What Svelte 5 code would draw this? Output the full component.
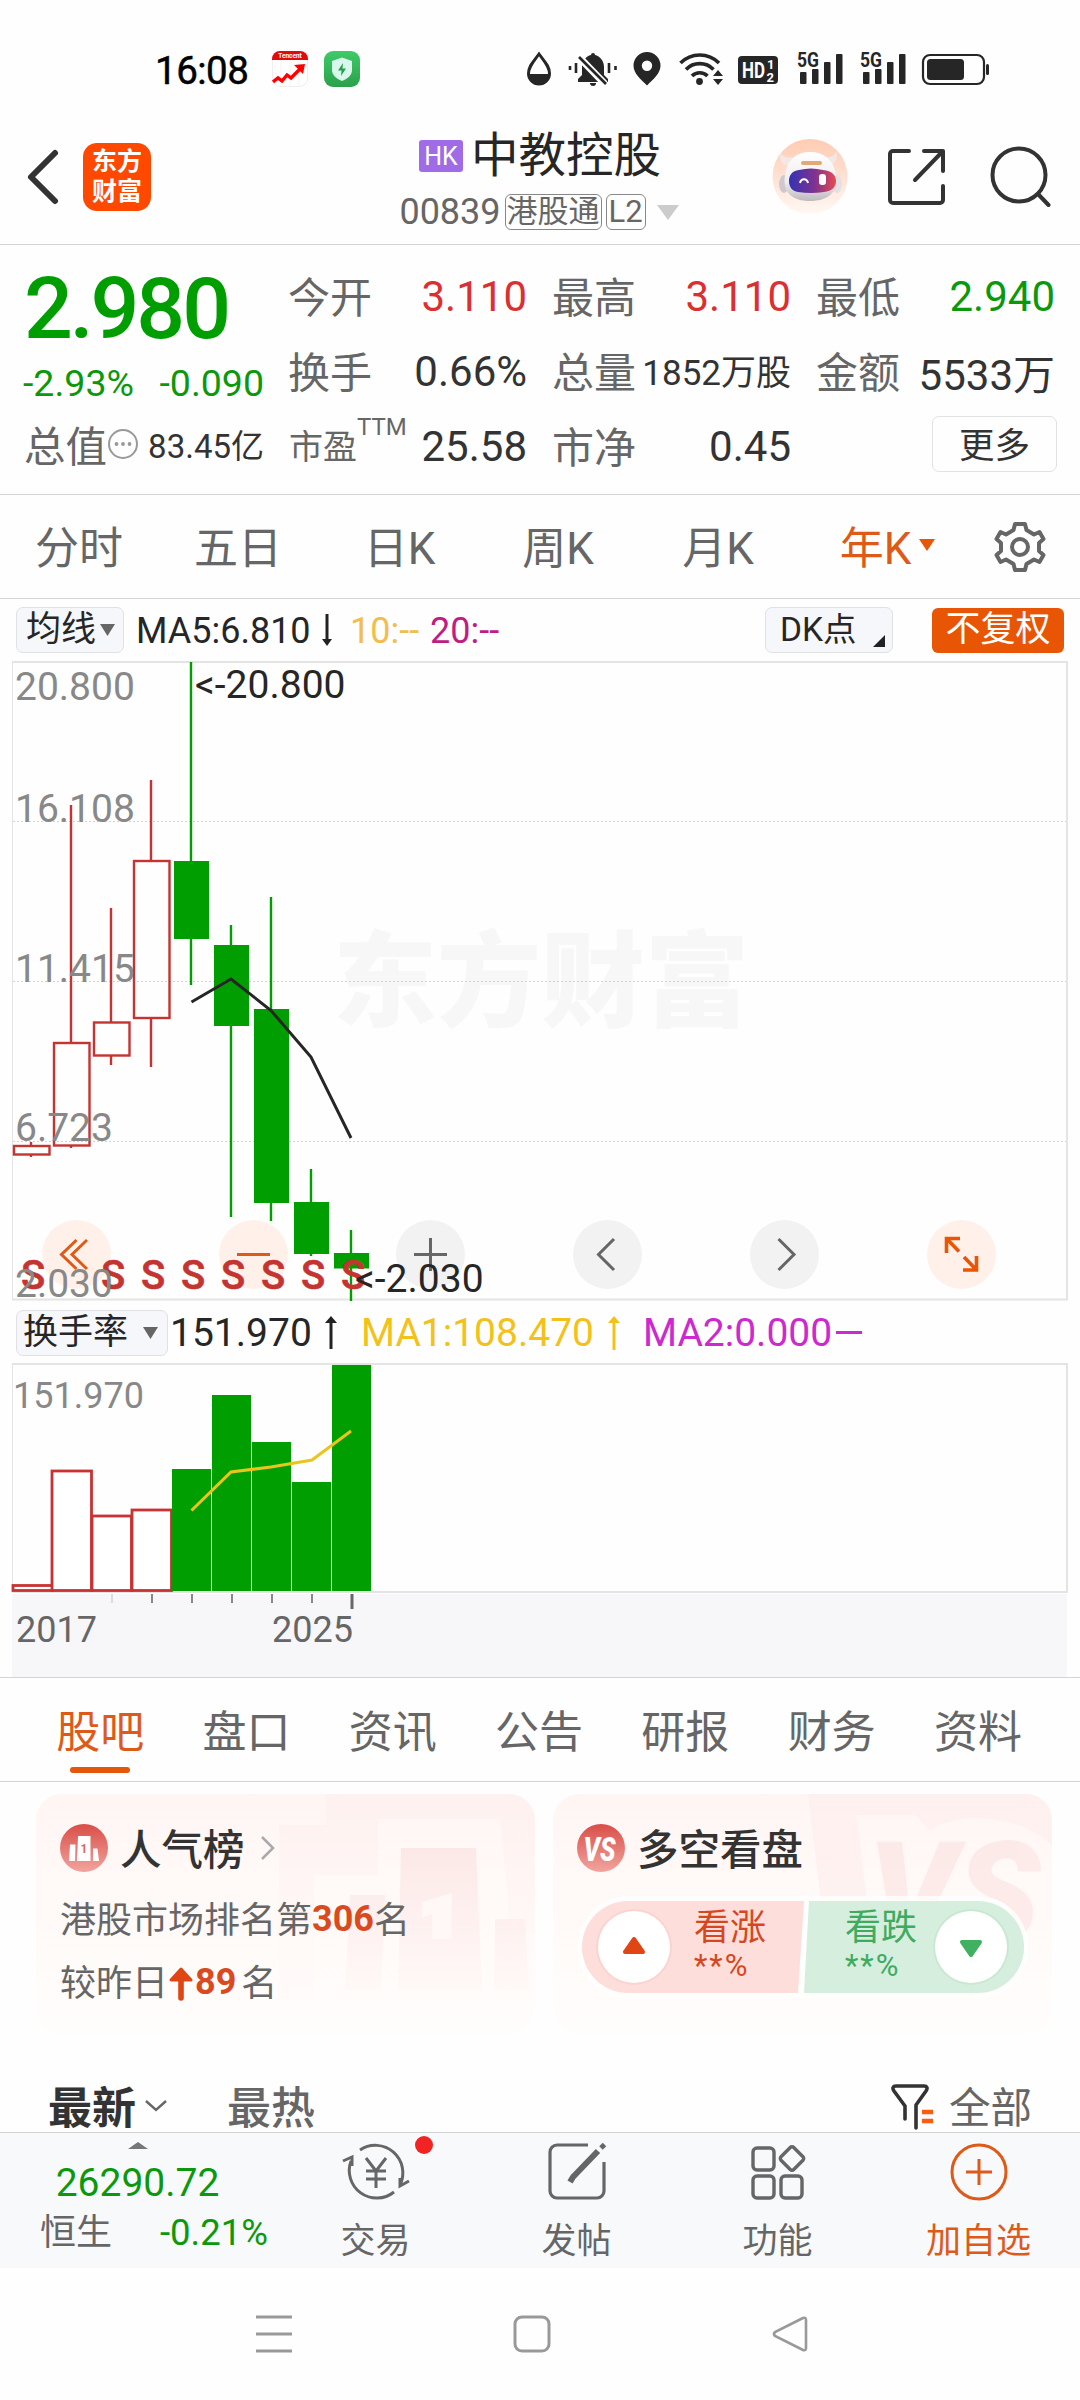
<script lang="ts">
    const quotes = [
        { label: "今开", value: "3.110", tone: "up" },
        { label: "最高", value: "3.110", tone: "up" },
        { label: "最低", value: "2.940", tone: "down" },
        { label: "换手", value: "0.66%", tone: "" },
        { label: "总量", value: "1852万股", tone: "small" },
        { label: "金额", value: "5533万", tone: "" },
    ];

    const periods = ["分时", "五日", "日K", "周K", "月K"];
    const sections = ["股吧", "盘口", "资讯", "公告", "研报", "财务", "资料"];

    // x, high, top of body, bottom of body, low
    const candles = [
        { x: 31, high: 1142, top: 1146, bottom: 1154.5, low: 1157, up: true },
        { x: 71, high: 805, top: 1043, bottom: 1145.5, low: 1148, up: true },
        { x: 111, high: 908, top: 1022.5, bottom: 1055.5, low: 1065, up: true },
        { x: 151, high: 780, top: 861, bottom: 1018, low: 1067, up: true },
        { x: 191, high: 662, top: 861, bottom: 939, low: 985, up: false },
        { x: 231, high: 925, top: 945, bottom: 1026, low: 1217, up: false },
        { x: 271, high: 897, top: 1009, bottom: 1203, low: 1221, up: false },
        { x: 311, high: 1169, top: 1202, bottom: 1254, low: 1256, up: false },
        { x: 351, high: 1230, top: 1253, bottom: 1268.5, low: 1301, up: false },
    ];

    const grid = [821.5, 981.5, 1141.5];
    const prices = [
        { y: 700, text: "20.800" },
        { y: 822, text: "16.108" },
        { y: 982, text: "11.415" },
        { y: 1141, text: "6.723" },
        { y: 1297, text: "2.030" },
    ];
    const signals = [33, 113, 153, 193, 233, 273, 313, 353];

    const volumes = [
        { x: 13, top: 1585.5, up: true },
        { x: 52, top: 1471, up: true },
        { x: 92, top: 1516, up: true },
        { x: 132, top: 1510, up: true },
        { x: 172, top: 1469, up: false },
        { x: 212, top: 1395, up: false },
        { x: 252, top: 1442, up: false },
        { x: 292, top: 1482, up: false },
        { x: 332, top: 1365, up: false },
    ];
    const ticks = [152, 192, 232, 272, 312];
</script>

<div class="screen">
    <div class="status">
        <span class="time">16:08</span>
        <svg class="app-icon" width="36" height="36" viewBox="0 0 36 36">
            <rect x="0.5" y="0.5" width="35" height="35" rx="8" fill="#fff" stroke="#eee" />
            <path d="M0 9V8a8 8 0 0 1 8-8h20a8 8 0 0 1 8 8v1z" fill="#e00b0b" />
            <path d="M9 9v26M18 9v26M27 9v26" stroke="#f3f3f3" />
            <text x="18" y="7" font-size="6.5" font-weight="700" fill="#fff" text-anchor="middle">Tencent</text>
            <path d="M1 31l5-4 4 3 5-6 4 3 10-10" fill="none" stroke="#f00" stroke-width="3.4" />
            <path d="M22 14l11-1-2 10z" fill="#f00" />
        </svg>
        <svg class="shield" width="36" height="36" viewBox="0 0 36 36">
            <defs>
                <linearGradient id="green" x1="0" y1="0" x2="0" y2="1">
                    <stop offset="0" stop-color="#3ecb68" /><stop offset="1" stop-color="#2ba04b" />
                </linearGradient>
            </defs>
            <rect width="36" height="36" rx="9" fill="url(#green)" />
            <path d="M18 6.500l10 3.500v9c0 5-4 8.500-10 11-6-2.500-10-6-10-11v-9z" fill="#d9f7ec" />
            <path d="M19 12l-5 7.500h3.500L17 25l5-7.500h-3.500z" fill="#25a04a" />
        </svg>
        <svg class="system" width="470" height="40" viewBox="522 48 470 40">
            <path d="M539 54c-5 7-10.500 12-10.500 19.500a10.500 10.500 0 0 0 21 0C549.500 66 544 61 539 54z" fill="none" stroke="#262626" stroke-width="3" />
            <path d="M528.500 74h21c0 7-5 11-10.500 11s-10.500-4-10.500-11z" fill="#262626" />
            <path d="M578 82v-3l4-4v-8c0-6 4-11 9-12a2 2 0 0 1 4 0c5 1 9 6 9 12v8l4 4v3z" fill="#262626" />
            <path d="M590 83h6a3 3 0 0 1-6 0z" fill="#262626" />
            <path d="M577 55l28 29" stroke="#fff" stroke-width="7" />
            <path d="M579 57l27 27" stroke="#262626" stroke-width="2.600" />
            <path d="M570 66v4M576 63v10M609 63v10M615.500 66v4" stroke="#262626" stroke-width="2.600" />
            <path fill-rule="evenodd" d="M647 52a13.500 13.500 0 0 1 13.500 13.500c0 8-7 13.500-13.500 20-6.500-6.500-13.500-12-13.500-20A13.500 13.500 0 0 1 647 52zm0 8.500a5 5 0 1 0 0 10.400 5 5 0 0 0 0-10.400z" fill="#262626" />
            <g fill="none" stroke="#262626" stroke-width="3.600">
                <path d="M680.500 63a27 27 0 0 1 38.500 0M686 69.500a19 19 0 0 1 27.500 0M692 76a11 11 0 0 1 15.500 0" />
            </g>
            <circle cx="699.500" cy="81.500" r="3.400" fill="#262626" />
            <path d="M713 76l5-6 5 6zM713 79l5 6 5-6z" fill="#262626" />
            <rect x="738" y="56" width="40" height="28" rx="4" fill="#262626" />
            <g fill="#fff" font-weight="700">
                <text x="742" y="78" font-size="22" textLength="23" lengthAdjust="spacingAndGlyphs">HD</text>
                <text x="767" y="69" font-size="13">1</text>
                <text x="766.500" y="81.500" font-size="13">2</text>
            </g>
            {#each [797, 860] as x}
                <text {x} y="67" font-size="21" font-weight="700" fill="#262626" textLength="22" lengthAdjust="spacingAndGlyphs">5G</text>
                <rect x={x + 3} y="72" width="6.500" height="12" rx="1" fill="#262626" />
                <rect x={x + 15} y="69" width="6.500" height="15" rx="1" fill="#262626" />
                <rect x={x + 27} y="62" width="6.500" height="22" rx="1" fill="#262626" />
                <rect x={x + 39} y="54" width="6.500" height="30" rx="1" fill="#262626" />
            {/each}
            <rect x="923" y="55" width="61" height="29" rx="7" fill="none" stroke="#262626" stroke-width="2.200" />
            <rect x="927" y="59" width="37" height="21" rx="3.500" fill="#262626" />
            <rect x="986" y="64" width="3" height="11" rx="1.500" fill="#262626" />
        </svg>
    </div>

    <header>
        <div class="left">
            <svg width="36" height="60" viewBox="0 0 36 60"><path d="M30 6L6 30l24 24" fill="none" stroke="#333" stroke-width="6" stroke-linecap="round" stroke-linejoin="round" /></svg>
            <div class="logo"><span>东方</span><span>财富</span></div>
        </div>
        <div class="title">
            <div class="name"><b>HK</b>中教控股</div>
            <div class="code">00839<i class="wide">港股通</i><i>L2</i>
                <svg width="22" height="15" viewBox="0 0 22 15"><path d="M0 0h22L11 15z" fill="#ccc" /></svg>
            </div>
        </div>
        <div class="actions">
            <svg width="76" height="76" viewBox="0 0 76 76">
                <defs>
                    <linearGradient id="halo" x1="0" y1="0" x2="0" y2="1"><stop offset="0" stop-color="#ffcbb2" /><stop offset="1" stop-color="#fff8f4" /></linearGradient>
                    <linearGradient id="visor"><stop offset="0" stop-color="#3432b4" /><stop offset="0.55" stop-color="#80328f" /><stop offset="1" stop-color="#e84b50" /></linearGradient>
                    <linearGradient id="shell" x1="0" y1="0" x2="0" y2="1"><stop offset="0" stop-color="#fff" /><stop offset="0.600" stop-color="#f0edef" /><stop offset="1" stop-color="#bdb9bd" /></linearGradient>
                </defs>
                <circle cx="38" cy="37.500" r="37.500" fill="url(#halo)" />
                <path d="M18 27c-9-1-12-7-9-13 2 5 8 5 14 4zM54 27c9-1 13-7 10-14-2 5-8 6-14 5z" fill="#f3e8e5" />
                <ellipse cx="12" cy="45" rx="5" ry="9" fill="#cfc9ce" />
                <ellipse cx="65" cy="45" rx="5" ry="9" fill="#e6e0e2" />
                <path d="M38 13c-14 0-23 8-25 23-3 18 8 26 25 26s29-8 26-26C62 21 52 13 38 13z" fill="url(#shell)" />
                <rect x="29" y="22" width="21" height="4" rx="2" fill="#e5a773" />
                <path d="M27 31q12-3 24 0c9 1 13 5 13 11s-4 10-12 11q-13 2-26 0c-6-1-9-5-9-11s3-10 10-11z" fill="url(#visor)" />
                <path d="M28 44c1-5 7-5 8 0" fill="none" stroke="#fff" stroke-width="2" />
                <rect x="47" y="35" width="7" height="11" rx="3" fill="#fff" />
            </svg>
            <svg class="share" width="60" height="60" viewBox="0 0 60 60" fill="none" stroke="#333" stroke-width="4" stroke-linecap="round" stroke-linejoin="round">
                <path d="M22 4H6a3 3 0 0 0-3 3v46a3 3 0 0 0 3 3h47a3 3 0 0 0 3-3V39M37 4h19v20M56 4L28 33" />
            </svg>
            <svg width="62" height="62" viewBox="0 0 62 62" fill="none" stroke="#333" stroke-width="4" stroke-linecap="round">
                <circle cx="30" cy="29" r="26.500" /><path d="M49 48l10.500 11" />
            </svg>
        </div>
    </header>

    <section class="quote">
        <div class="main">
            <div class="price">2.980</div>
            <div class="change"><span>-2.93%</span><span>-0.090</span></div>
            <div class="cap">
                <span>总值</span>
                <svg width="32" height="32" viewBox="0 0 32 32"><circle cx="16" cy="16" r="14" fill="none" stroke="#999" stroke-width="2" /><g fill="#999"><circle cx="9.500" cy="16" r="1.900" /><circle cx="16" cy="16" r="1.900" /><circle cx="22.500" cy="16" r="1.900" /></g></svg>
                <em>83.45亿</em>
            </div>
        </div>
        <div class="cells">
            {#each quotes as q}
                <div class="cell"><span>{q.label}</span><em class={q.tone}>{q.value}</em></div>
            {/each}
            <div class="cell"><span class="pe">市盈<sup>TTM</sup></span><em>25.58</em></div>
            <div class="cell"><span>市净</span><em>0.45</em></div>
            <div class="cell end"><button>更多</button></div>
        </div>
    </section>

    <nav class="periods">
        {#each periods as p}
            <span>{p}</span>
        {/each}
        <span class="on">年K<svg width="16" height="12" viewBox="0 0 16 12"><path d="M0 0h16L8 12z" fill="#e85505" /></svg></span>
        <span class="gear">
            <svg width="54" height="54" viewBox="-27 -27 54 54" fill="none" stroke="#666" stroke-width="4">
                <path d="M-5 -23H5L6.500 -17L14 -12.500L19.500 -15L23.500 -8L19 -4V4L23.500 8L19.500 15L14 12.500L6.500 17L5 23H-5L-6.500 17L-14 12.500L-19.500 15L-23.500 8L-19 4V-4L-23.500 -8L-19.500 -15L-14 -12.500L-6.500 -17Z" stroke-linejoin="round" />
                <circle r="8" />
            </svg>
        </span>
    </nav>

    <div class="legend">
        <span class="chip ma">均线<svg width="15" height="12" viewBox="0 0 15 12"><path d="M0 0h15L7.500 12z" fill="#666" /></svg></span>
        <span class="ma5">MA5:6.810</span>
        <svg class="arrow" width="12" height="32" viewBox="0 0 12 32"><path d="M6 0v27" stroke="#222" stroke-width="3" /><path d="M1 25h10l-5 7z" fill="#222" /></svg>
        <span class="ma10">10:--</span>
        <span class="ma20">20:--</span>
        <span class="chip dk">DK点<svg width="12" height="12" viewBox="0 0 12 12"><path d="M12 0v12H0z" fill="#222" /></svg></span>
        <span class="adjust">不复权</span>
    </div>

    <svg class="kline" width="1080" height="645" viewBox="0 660 1080 645">
        <text class="watermark" x="333" y="1019">东方财富</text>
        {#each grid as y}
            <path d="M13 {y}H1067" stroke="#d2d2d2" stroke-width="1" stroke-dasharray="2 2" />
        {/each}
        <path d="M12.500 662V1300" stroke="#e4e4e4" />
        <path d="M12 662H1067V1299.500H12" fill="none" stroke="#e4e4e4" stroke-width="2" />
        {#each [76.5, 253.5, 430.5, 607.5, 784.5, 961.5] as cx, i}
            <circle {cx} cy="1254.500" r="34.500" fill={i < 2 || i === 5 ? "#fff1ea" : "#f2f2f2"} />
        {/each}
        <g fill="none" stroke="#dd5a18" stroke-width="3">
            <path d="M76.500 1240L61.500 1254.500L76.500 1269M87 1240L72 1254.500L87 1269" />
            <path d="M237 1254.500H270" />
            <g stroke="#e85505" stroke-width="3.600"><path d="M960 1238.500H946.500V1253M946.500 1238.500L959 1251.500M963 1270H976.500V1256M964 1257L976.500 1270" /></g>
        </g>
        <g fill="none" stroke="#666" stroke-width="3">
            <path d="M414 1254.500H447M430.500 1238V1271" />
            <path d="M614 1239L598.500 1254.500L614 1270M778.500 1239L794 1254.500L778.500 1270" />
        </g>
        {#each candles as c}
            {#if c.up}
                <g fill="none" stroke="#c43431" stroke-width="2.400">
                    <path d="M{c.x} {c.high}V{c.top}M{c.x} {c.bottom}V{c.low}" />
                    <rect x={c.x - 17} y={c.top} width="35.500" height={c.bottom - c.top} />
                </g>
            {:else}
                <path d="M{c.x} {c.high}V{c.low}" stroke="#009e00" stroke-width="2.400" />
                <rect x={c.x - 17} y={c.top} width="35" height={c.bottom - c.top} fill="#009e00" />
            {/if}
        {/each}
        <path d="M191.500 1002L231 979L271 1010.500L311 1057L351 1138" fill="none" stroke="#262626" stroke-width="3" />
        {#each signals as x}
            <text class="signal" {x} y="1289">S</text>
        {/each}
        {#each prices as p}
            <text class="axis" x="15" y={p.y}>{p.text}</text>
        {/each}
        <text class="mark" x="195" y="698">&lt;-20.800</text>
        <text class="mark" x="355" y="1292">&lt;-2.030</text>
    </svg>

    <div class="legend second">
        <span class="chip turnover">换手率<svg width="15" height="12" viewBox="0 0 15 12"><path d="M0 0h15L7.500 12z" fill="#666" /></svg></span>
        <span class="rate">151.970</span>
        <svg class="arrow" width="12" height="33" viewBox="0 0 12 33"><path d="M6 5v28" stroke="#222" stroke-width="3" /><path d="M0 7h12L6 0z" fill="#222" /></svg>
        <span class="ma1">MA1:108.470</span>
        <svg class="arrow" width="12" height="34" viewBox="0 0 12 34"><path d="M6 5v29" stroke="#f2c21a" stroke-width="3" /><path d="M0 7h12L6 0z" fill="#f2c21a" /></svg>
        <span class="ma2">MA2:0.000</span>
        <i></i>
    </div>

    <svg class="volume" width="1080" height="317" viewBox="0 1360 1080 317">
        <rect x="12" y="1594" width="1055" height="83" fill="#f7f7fa" />
        <path d="M12.500 1364V1592" stroke="#e4e4e4" />
        <path d="M12 1364H1067V1592H12" fill="none" stroke="#e4e4e4" stroke-width="2" />
        {#each volumes as v}
            {#if v.up}
                <rect x={v.x} y={v.top} width="39.500" height={1590.5 - v.top} fill="#fff" stroke="#c83232" stroke-width="2.800" />
            {:else}
                <rect x={v.x} y={v.top} width="39" height={1591 - v.top} fill="#009e00" />
            {/if}
        {/each}
        <path d="M191.500 1510.500L231 1472L271 1467L312 1460L351 1431" fill="none" stroke="#eac51e" stroke-width="3" />
        <path d="M112 1594v9" stroke="#ddd" stroke-width="2" />
        {#each ticks as x}
            <path d="M{x} 1594v9" stroke="#888" stroke-width="2" />
        {/each}
        <path d="M352 1594v15" stroke="#666" stroke-width="3" />
        <text class="top" x="13" y="1408">151.970</text>
        <text class="year" x="16" y="1642">2017</text>
        <text class="year" x="272" y="1642">2025</text>
    </svg>

    <nav class="sections">
        {#each sections as s, i}
            <span class:on={i === 0}>{s}</span>
        {/each}
    </nav>

    <div class="cards">
        <div class="card">
            <svg class="art" width="499" height="240" viewBox="36 1794 499 240">
                <defs>
                    <linearGradient id="fade" x1="0" y1="0" x2="0" y2="1"><stop offset="0" stop-color="#fdeceb" /><stop offset="1" stop-color="#fffaf9" /></linearGradient>
                    <linearGradient id="block" x1="0" y1="0" x2="0" y2="1"><stop offset="0" stop-color="#fbe6e4" /><stop offset="1" stop-color="#fff8f7" /></linearGradient>
                </defs>
                <path d="M362 1794H535V1934H508V1900L500 1819H378V1875H314V2000H279V1825H326V1794z" fill="url(#fade)" opacity="0.500" />
                <path d="M401 1848H476L482 1990H398zM350 1895H385L381 1990H345zM495 1919H525L529 1990H494z" fill="url(#block)" opacity="0.850" />
                <path d="M422 1902L452 1893V1939H432V1914L422 1918z" fill="#fff8f6" />
            </svg>
            <div class="head">
                <svg width="48" height="48" viewBox="0 0 48 48">
                    <defs><linearGradient id="badge" x1="0" y1="0" x2="0" y2="1"><stop offset="0" stop-color="#d94e48" /><stop offset="1" stop-color="#f2a49e" /></linearGradient></defs>
                    <circle cx="24" cy="24" r="24" fill="url(#badge)" />
                    <path d="M18 12h12.500v25H17zM10 20.500h5.500L15 37H9zM33 24.500h4.500L39 37h-6z" fill="#fff" />
                    <text x="24" y="28.500" font-size="12" font-weight="700" fill="#df655f" text-anchor="middle">1</text>
                </svg>
                <h3>人气榜</h3>
                <svg class="more" width="16" height="26" viewBox="0 0 16 26"><path d="M2 2l11 11L2 24" fill="none" stroke="#aaa" stroke-width="2.600" /></svg>
            </div>
            <p>港股市场排名第<b>306</b>名</p>
            <p class="rise">较昨日<svg width="26" height="36" viewBox="0 0 26 36"><path d="M13 3L3 14h20z" fill="#e04514" stroke="#e04514" stroke-width="3" stroke-linejoin="round" /><path d="M13 12v20" stroke="#e04514" stroke-width="5.600" stroke-linecap="round" /></svg><b>89</b>名</p>
        </div>
        <div class="card">
            <svg class="art" width="499" height="240" viewBox="553 1794 499 240">
                <path d="M808 1794H1052V1845C1020 1815 960 1810 930 1830L915 1815H856L868 1910H822z" fill="#fdeceb" opacity="0.600" />
                <text class="vs" x="868" y="1942" textLength="172" lengthAdjust="spacingAndGlyphs">VS</text>
            </svg>
            <div class="head">
                <svg width="48" height="48" viewBox="0 0 48 48">
                    <circle cx="24" cy="24" r="24" fill="url(#badge)" />
                    <text x="22.500" y="37" font-size="34" font-weight="900" font-style="italic" fill="#fff" text-anchor="middle" textLength="32" lengthAdjust="spacingAndGlyphs">VS</text>
                </svg>
                <h3>多空看盘</h3>
            </div>
            <div class="vote">
                <svg width="450" height="102" viewBox="0 0 450 102">
                    <rect width="450" height="102" rx="50" fill="#fff" opacity="0.800" />
                    <path d="M50 5H226L220 97H50a46 46 0 0 1 0-92z" fill="#fddedb" />
                    <path d="M231 5H400a46 46 0 0 1 0 92H226z" fill="#d6eedd" />
                    <circle cx="56" cy="51" r="38" fill="#fbd3cf" /><circle cx="56" cy="51" r="36" fill="#fff" />
                    <circle cx="393" cy="51" r="38" fill="#c9e8d2" /><circle cx="393" cy="51" r="36" fill="#fff" />
                    <path d="M56 43l9 13H47z" fill="#e04514" stroke="#e04514" stroke-width="4" stroke-linejoin="round" />
                    <path d="M393 59l-9-13h18z" fill="#40b061" stroke="#40b061" stroke-width="4" stroke-linejoin="round" />
                </svg>
                <div class="bull"><span>看涨</span><small>**%</small></div>
                <div class="bear"><span>看跌</span><small>**%</small></div>
            </div>
        </div>
    </div>

    <div class="sort">
        <b>最新</b>
        <svg class="caret" width="22" height="14" viewBox="0 0 22 14"><path d="M1 2l10 9L21 2" fill="none" stroke="#666" stroke-width="2.400" /></svg>
        <strong>最热</strong>
        <svg class="filter" width="44" height="46" viewBox="0 0 44 46">
            <path d="M14 35V22L3 7c-2-3-1-5 2-5h28c3 0 4 2 2 5L25 21v23" fill="none" stroke="#333" stroke-width="3.600" stroke-linecap="round" />
            <path d="M31 28h11M31 37h11" stroke="#fb5d10" stroke-width="4.400" />
        </svg>
        <span>全部</span>
    </div>

    <footer>
        <div class="index">
            <svg width="20" height="7" viewBox="0 0 20 7"><path d="M10 0l10 7H0z" fill="#777" /></svg>
            <span>26290.72</span>
            <div><em>恒生</em><span>-0.21%</span></div>
        </div>
        <div class="tool">
            <svg width="70" height="62" viewBox="0 0 70 62" fill="none" stroke="#666" stroke-width="3">
                <path d="M19 9A27.500 27.500 0 0 1 59 44M53 51A27.500 27.500 0 0 1 10 20M2 20l9-4v9M59 37v8L68 40" />
                <path d="M25 17l10 13 10-13M25 30h20M25 38h20M35 30v17" />
            </svg>
            <i class="dot"></i>
            <span>交易</span>
        </div>
        <div class="tool">
            <svg width="62" height="62" viewBox="0 0 62 62" fill="none" stroke="#666" stroke-width="3.200">
                <path d="M42 4H11a7 7 0 0 0-7 7v39a7 7 0 0 0 7 7h40a7 7 0 0 0 7-7V21" />
                <path d="M52 10L27 36l-3 5" stroke-width="6" /><path d="M55 3.500l3.500 3.500" stroke-width="5" />
            </svg>
            <span>发帖</span>
        </div>
        <div class="tool">
            <svg width="62" height="62" viewBox="0 0 62 62" fill="none" stroke="#666" stroke-width="3.400">
                <rect x="6" y="7" width="21" height="22" rx="4" /><rect x="6" y="35" width="21" height="22" rx="4" /><rect x="34" y="35" width="21" height="22" rx="4" />
                <rect x="36" y="8.500" width="18" height="18" rx="2.500" transform="rotate(45 45 17.500)" />
            </svg>
            <span>功能</span>
        </div>
        <div class="tool add">
            <svg width="62" height="62" viewBox="0 0 62 62" fill="none" stroke="#dd5a18" stroke-width="3"><circle cx="31" cy="31" r="27" /><path d="M18 31h26M31 18v26" /></svg>
            <span>加自选</span>
        </div>
    </footer>

    <div class="keys">
        <svg width="38" height="40" viewBox="0 0 38 40"><path d="M1 3h36M1 20h36M1 37h36" stroke="#999" stroke-width="3" /></svg>
        <svg width="38" height="40" viewBox="0 0 38 40"><rect x="2" y="3" width="34" height="34" rx="7" fill="none" stroke="#999" stroke-width="3" /></svg>
        <svg width="38" height="40" viewBox="0 0 38 40"><path d="M32 4L4 18q-2 2 0 4l28 14q3 1 3-2V6q0-3-3-2z" fill="none" stroke="#999" stroke-width="2.600" /></svg>
    </div>
</div>

<style>
    :global(body) {
        background: #fefefe;
    }

    .screen {
        width: 1080px;
        height: 2400px;
        overflow: hidden;
        font-family: Roboto, "Noto Sans CJK SC", sans-serif;
        color: #333;
        background: #fefefe;
    }

    svg {
        display: block;
        flex: none;
    }

    em, i {
        font-style: normal;
    }

    .status {
        display: flex;
        align-items: center;
        height: 138px;
        box-sizing: border-box;
        padding: 0 0 0 155px;
    }

    .time {
        width: 117px;
        padding-top: 2px;
        box-sizing: border-box;
        font-size: 38.500px;
        letter-spacing: -0.5px;
        color: #000;
        -webkit-text-stroke: 0.5px #000;
    }

    .shield {
        margin-left: 16px;
    }

    .system {
        margin: -2px 0 0 162px;
    }

    header {
        display: grid;
        grid-template-columns: 1fr auto 1fr;
        height: 106px;
        border-bottom: 1px solid #d4d4d4;
    }

    .left {
        display: flex;
        align-items: center;
        height: 78px;
        padding-left: 25px;
    }

    .logo {
        display: flex;
        flex-direction: column;
        justify-content: center;
        align-items: center;
        width: 68px;
        height: 68px;
        margin-left: 22px;
        border-radius: 14px;
        background: #ff4800;
        color: #fff;
        font-size: 25px;
        font-weight: 700;
        line-height: 30px;
    }

    .name {
        display: flex;
        justify-content: center;
        align-items: center;
        height: 36px;
        line-height: 37px;
        font-size: 47.500px;
        color: #262626;
    }

    .name b {
        width: 44px;
        height: 32px;
        margin-right: 8px;
        border-radius: 3px;
        background: #a06be6;
        color: #fff;
        font-size: 25px;
        font-weight: 400;
        line-height: 33px;
        text-align: center;
    }

    .code {
        display: flex;
        align-items: center;
        height: 36px;
        margin: 20px 0 0 -2px;
        color: #666;
        font-size: 36px;
    }

    .code i {
        height: 34px;
        width: 38px;
        margin-left: 4px;
        border: 1px solid #888;
        border-radius: 6px;
        font-size: 31px;
        line-height: 33px;
        text-align: center;
    }

    .code .wide {
        width: 95px;
    }

    .code svg {
        margin-left: 11px;
    }

    .actions {
        display: flex;
        justify-content: flex-end;
        align-items: center;
        height: 78px;
        padding-right: 29px;
    }

    .share {
        margin: 0 42px 0 39px;
    }

    .quote {
        display: flex;
        height: 249px;
        border-bottom: 1px solid #d4d4d4;
    }

    .main {
        width: 241px;
        padding: 18px 25px 0 23px;
    }

    .price {
        height: 92px;
        padding-left: 1px;
        line-height: 92px;
        font-size: 86px;
        font-weight: 500;
        letter-spacing: -3.100px;
        color: #009e00;
    }

    .change {
        display: flex;
        justify-content: space-between;
        height: 56px;
        line-height: 57px;
        font-size: 37.500px;
        color: #0c980c;
    }

    .cap {
        display: flex;
        align-items: center;
        height: 70px;
        padding-left: 1px;
        font-size: 41.500px;
        color: #666;
    }

    .cap span {
        margin-top: -5px;
    }

    .cap svg {
        margin-top: -5px;
    }

    .cap em {
        margin: -5px 0 0 auto;
        font-size: 33px;
        color: #333;
    }

    .cells {
        display: grid;
        grid-template-columns: repeat(3, 238px);
        grid-template-rows: repeat(3, 75px);
        column-gap: 26px;
        padding-top: 13px;
    }

    .cell {
        display: flex;
        justify-content: space-between;
        align-items: center;
        font-size: 42px;
        white-space: nowrap;
    }

    .cell span {
        margin: -3px 0 0 -1px;
        color: #666;
    }

    .cell em {
        padding-top: 1px;
    }

    .cell .pe {
        display: flex;
        margin-left: 0;
        font-size: 34px;
    }

    .cell sup {
        margin-top: -5px;
        font-size: 24px;
        line-height: 24px;
    }

    .up {
        color: #dc2f2f;
    }

    .down {
        color: #0c980c;
    }

    .cell .small {
        padding: 0;
        margin-top: -2px;
        font-size: 35px;
    }

    .end {
        justify-content: flex-end;
    }

    .cell button {
        width: 125px;
        height: 56px;
        margin: -3px -2px 0 0;
        padding: 0 0 5px;
        border: 1px solid #e2e2e2;
        border-radius: 7px;
        background: none;
        color: #333;
        font: 35.500px Roboto, "Noto Sans CJK SC", sans-serif;
    }

    .periods {
        display: grid;
        grid-template-columns: 158px 160px 163px 154px 166px 173px 92px;
        height: 103px;
        border-bottom: 1px solid #d4d4d4;
        color: #666;
        font-size: 44px;
    }

    .periods span {
        display: flex;
        justify-content: center;
        align-items: center;
        padding-bottom: 3px;
    }

    .periods .gear {
        padding: 1px 0 0;
    }

    .periods .on {
        color: #dd5a18;
    }

    .periods .on svg {
        margin: 0 0 0 8px;
    }

    .legend {
        display: flex;
        align-items: center;
        height: 61px;
        padding-left: 16px;
        font-size: 36px;
        color: #262626;
    }

    .chip {
        display: flex;
        align-items: center;
        box-sizing: border-box;
        height: 46px;
        border: 1px solid #dfe1e5;
        border-radius: 7px;
        background: #f6f7fa;
        line-height: 42px;
    }

    .chip.ma {
        width: 108px;
        padding-left: 9px;
        font-size: 35px;
    }

    .chip.ma svg {
        margin-left: 4px;
    }

    .ma5 {
        width: 185px;
        margin-left: 12px;
        padding-top: 2px;
    }

    .ma10 {
        width: 80px;
        margin: 2px 0 0 17px;
        color: #f3bd4c;
    }

    .ma20 {
        margin-top: 2px;
        color: #bf1c86;
    }

    .chip.dk {
        width: 128px;
        margin-left: auto;
        padding-left: 14px;
        font-size: 33.500px;
    }

    .chip.dk svg {
        margin: 22px 0 0 16px;
    }

    .adjust {
        width: 132px;
        height: 45px;
        margin: 2px 16px 0 39px;
        border-radius: 6px;
        background: #e85505;
        color: #fff;
        font-size: 35px;
        line-height: 44px;
        text-align: center;
    }

    .watermark {
        font-size: 104px;
        font-weight: 900;
        fill: #f7f7f7;
    }

    .axis {
        font-size: 39px;
        fill: #888;
    }

    .signal {
        font-size: 40px;
        font-weight: 500;
        fill: #c43431;
        stroke: #c43431;
        stroke-width: 0.6px;
        text-anchor: middle;
    }

    .mark {
        font-size: 39px;
        fill: #262626;
    }

    .second {
        height: 55px;
        font-size: 39px;
    }

    .turnover {
        width: 152px;
        padding-left: 6px;
        font-size: 35px;
    }

    .turnover svg {
        margin-left: 15px;
    }

    .rate {
        width: 155px;
        margin-left: 2px;
    }

    .ma1 {
        width: 247px;
        margin-left: 24px;
        color: #f2c21a;
    }

    .ma2 {
        margin-left: 23px;
        color: #cc29cf;
    }

    .second i {
        width: 26px;
        height: 3px;
        margin-left: 4px;
        background: #cc29cf;
    }

    .top {
        font-size: 36px;
        fill: #888;
    }

    .year {
        font-size: 36px;
        fill: #666;
    }

    .sections {
        display: flex;
        height: 103px;
        padding-left: 27px;
        border-top: 1px solid #d4d4d4;
        border-bottom: 1px solid #d4d4d4;
        font-size: 44px;
        color: #666;
    }

    .sections span {
        display: flex;
        flex-direction: column;
        align-items: center;
        width: 146.300px;
        line-height: 110px;
    }

    .sections .on {
        color: #dd5a18;
    }

    .sections .on::after {
        content: "";
        width: 60px;
        height: 6px;
        margin-top: -21px;
        border-radius: 3px;
        background: #e4560a;
    }

    .cards {
        display: flex;
        gap: 18px;
        padding: 12px 28px 0 36px;
    }

    .card {
        position: relative;
        box-sizing: border-box;
        width: 499px;
        height: 240px;
        padding: 30px 0 0 24px;
        overflow: hidden;
        border-radius: 26px;
        background: linear-gradient(#fff6f4, #fffaf8 50%, #fffdfc);
    }

    .art {
        position: absolute;
        top: 0;
        left: 0;
    }

    .head {
        position: relative;
        display: flex;
        align-items: center;
        height: 48px;
    }

    h3 {
        margin: 6px 0 0 12px;
        font-size: 41.500px;
        font-weight: 500;
        line-height: 48px;
    }

    .more {
        margin-left: 15px;
    }

    .card p {
        position: relative;
        display: flex;
        align-items: center;
        height: 60px;
        margin: 15px 0 0;
        font-size: 36px;
        color: #666;
        white-space: pre;
    }

    .card .rise {
        margin-top: 3px;
    }

    .card b {
        padding-top: 3px;
        color: #d94a1e;
        font-weight: 700;
    }

    .rise svg {
        margin-top: 8px;
    }

    .rise b {
        margin: 0 5px 0 1px;
    }

    .vs {
        font-size: 140px;
        font-weight: 900;
        font-style: italic;
        fill: #fbe4e2;
        opacity: 0.650;
    }

    .vote {
        position: relative;
        width: 450px;
        height: 102px;
        margin: 24px 0 0 1px;
    }

    .bull, .bear {
        position: absolute;
        top: 11px;
        left: 116px;
        display: flex;
        flex-direction: column;
        font-size: 36px;
        line-height: 43px;
        color: #d5481f;
    }

    .bear {
        left: 267px;
        color: #40ab60;
    }

    .vote small {
        font-size: 31px;
        line-height: 32px;
        letter-spacing: 2px;
    }

    .sort {
        display: flex;
        align-items: center;
        height: 98px;
        padding: 0 48px 0 48px;
        font-size: 44px;
        line-height: 44px;
    }

    .sort b, .sort strong {
        margin-top: 51px;
        font-weight: 500;
    }

    .sort b {
        font-weight: 700;
    }

    .sort strong {
        margin-left: 60px;
        color: #666;
    }

    .caret {
        margin: 46px 0 0 9px;
    }

    .filter {
        margin: 47px 0 0 auto;
    }

    .sort span {
        margin: 52px 0 0 14px;
        font-size: 41.500px;
        color: #666;
    }

    footer {
        display: flex;
        box-sizing: border-box;
        height: 136px;
        border-top: 1px solid #d0d3d6;
        background: #f7f9fb;
        color: #666;
        font-size: 35px;
    }

    .index {
        display: flex;
        flex-direction: column;
        align-items: center;
        width: 275px;
        padding-top: 9px;
        line-height: 40px;
        color: #0c980c;
        font-size: 36.500px;
    }

    .index > span {
        margin-top: 14px;
        font-size: 39px;
    }

    .index div {
        display: flex;
        justify-content: space-between;
        width: 228px;
        margin: 10px 0 0 33px;
    }

    .index em {
        color: #666;
        font-size: 36px;
    }

    .tool {
        position: relative;
        display: flex;
        flex-direction: column;
        align-items: center;
        width: 201px;
        padding-top: 8px;
        line-height: 40px;
    }

    .tool span {
        margin-top: 19px;
    }

    .dot {
        position: absolute;
        top: 3px;
        left: 140px;
        width: 18px;
        height: 18px;
        border-radius: 50%;
        background: #f22323;
    }

    .add {
        color: #dd5a18;
    }

    .keys {
        display: flex;
        gap: 220px;
        padding: 46px 0 0 255px;
    }
</style>
